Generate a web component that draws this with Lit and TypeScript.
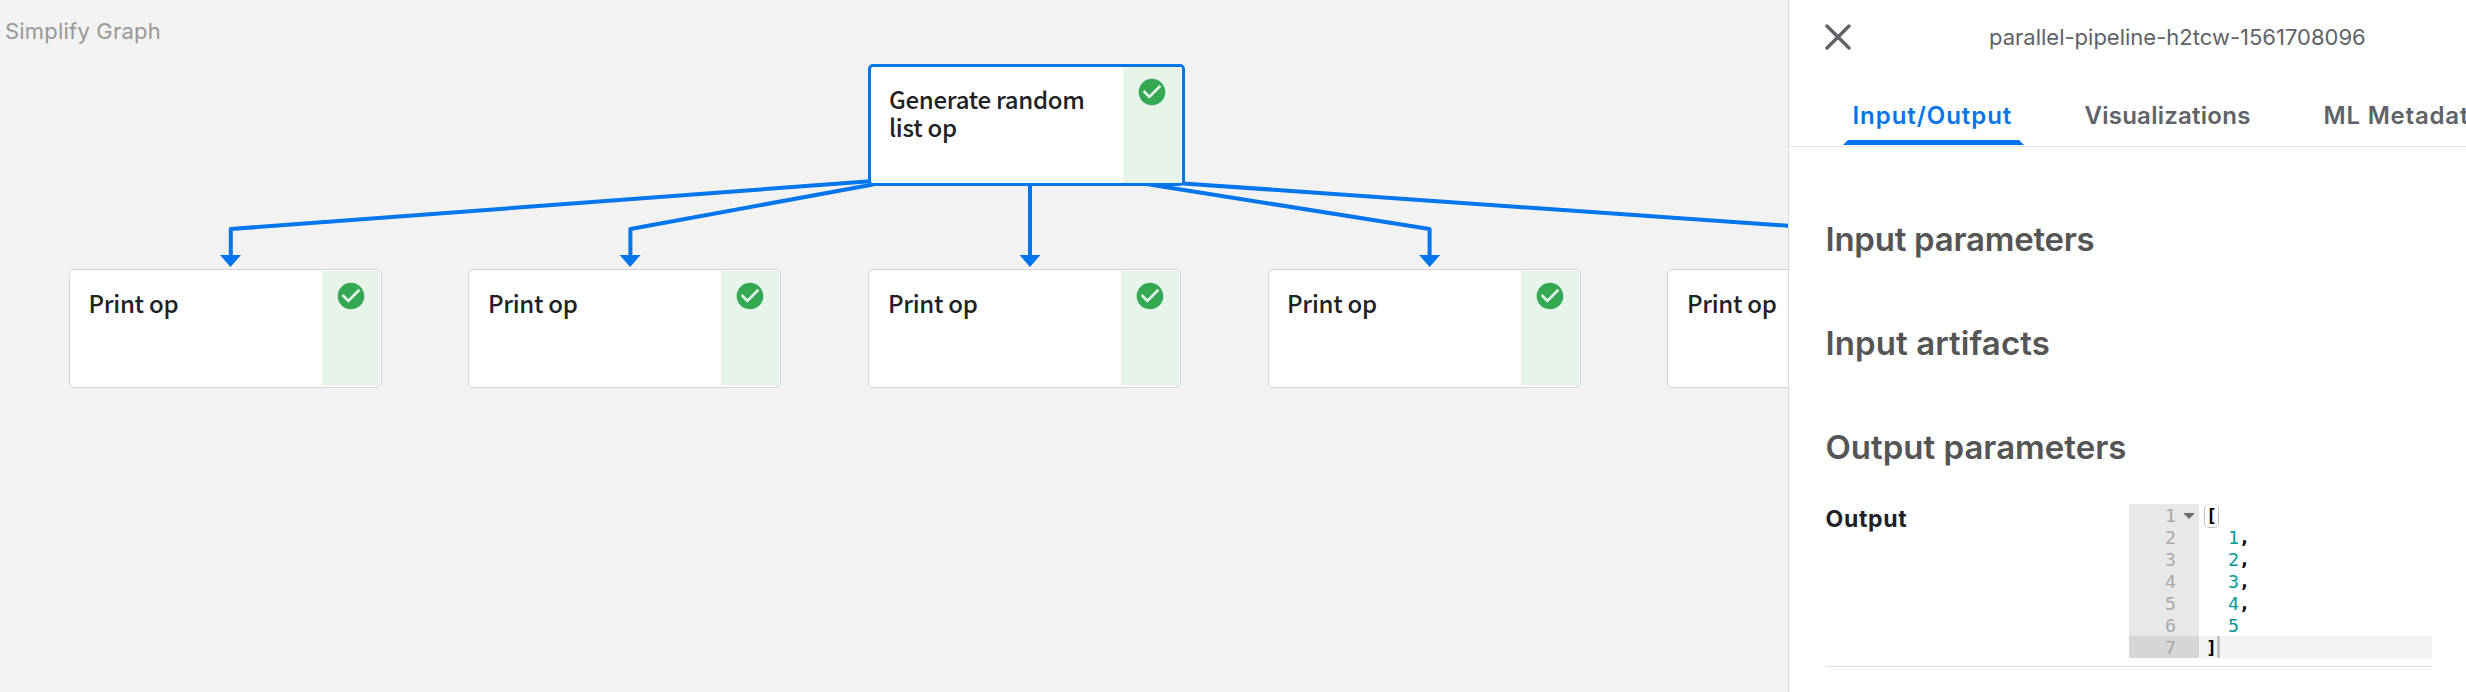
import { LitElement, html, svg, css } from "lit";
import { customElement, property } from "lit/decorators.js";
import { styleMap } from "lit/directives/style-map.js";

interface GraphNode {
  label: string;
  x: number;
  y: number;
  selected?: boolean;
}

const NODES: GraphNode[] = [
  { label: "Generate random list op", x: 868, y: 64, selected: true },
  { label: "Print op", x: 69, y: 269 },
  { label: "Print op", x: 468.4, y: 269 },
  { label: "Print op", x: 868.4, y: 269 },
  { label: "Print op", x: 1267.6, y: 269 },
  { label: "Print op", x: 1667.4, y: 269 },
];

const EDGES = [
  { points: "870,181.3 230.8,229 230.8,258", tip: 230.5 },
  { points: "873,184.5 630.4,229 630.4,258", tip: 630.1 },
  { points: "1030,186 1030,258", tip: 1030 },
  { points: "1140,183 1429.6,229 1429.6,258", tip: 1429.6 },
  { points: "1183,183.4 1829,228.6 1829,258", tip: 1829 },
];

@customElement("graph-node")
export class GraphNodeCard extends LitElement {
  @property() label = "";
  @property({ type: Boolean, reflect: true }) selected = false;

  static styles = css`
    :host {
      box-sizing: border-box;
      display: flex;
      width: 313px;
      height: 119px;
      padding: 1px;
      border: 1px solid #d4d4d4;
      border-radius: 5px;
      background: #fff;
      overflow: hidden;
    }
    :host([selected]) {
      width: 317px;
      height: 122px;
      padding: 0;
      border: 3px solid #0175ec;
    }
    .label {
      flex: 1;
      padding: 18px 20px 0 17.5px;
      font: 500 24px/28px "Noto Sans CJK SC", sans-serif;
      letter-spacing: -0.29px;
      color: #202124;
    }
    :host([selected]) .label {
      padding-top: 18px;
      padding-left: 18px;
    }
    .status {
      box-sizing: border-box;
      width: 58px;
      padding-top: 9px;
      background: #e6f4ea;
      display: flex;
      justify-content: center;
    }
    :host([selected]) .status {
      border-right: 1px solid #fff;
      width: 59px;
    }
    svg {
      width: 32px;
      height: 32px;
    }
  `;

  render() {
    return html`
      <div class="label">${this.label}</div>
      <div class="status">
        <svg viewBox="0 0 24 24">
          <path
            fill="#34a853"
            d="M12 2C6.48 2 2 6.48 2 12s4.480 10 10 10 10-4.480 10-10S17.520 2 12 2zm-2 15l-5-5 1.410-1.410L10 14.170l7.590-7.590L19 8l-9 9z"
          />
        </svg>
      </div>
    `;
  }
}

@customElement("json-editor")
export class JsonEditor extends LitElement {
  static styles = css`
    :host {
      display: block;
      width: 303px;
      font: 18.3px/23px "DejaVu Sans Mono", monospace;
    }
    .row {
      display: flex;
      height: 22px;
    }
    .gutter {
      box-sizing: border-box;
      width: 70px;
      padding: 1px 0 0 36px;
      background: #e8e8e8;
      color: #a8a8a8;
      display: flex;
      align-items: center;
      gap: 8px;
    }
    .code {
      flex: 1;
      padding-left: 7px;
      display: flex;
      white-space: pre;
    }
    .active .gutter {
      background: #d6d6d6;
    }
    .active .code {
      background: #f4f4f4;
    }
    .num {
      color: #099;
    }
    .bracket {
      font-weight: 700;
      color: #000;
    }
    .match {
      box-sizing: border-box;
      width: 15px;
      height: 24px;
      margin: 0 0 0 -2px;
      padding-left: 1px;
      border: 1px solid #c0c0c0;
      border-top: 0;
      border-radius: 5px;
    }
    .cursor {
      width: 3px;
      background: #c2c2c2;
    }
    .fold {
      width: 10px;
      height: 6px;
    }
  `;

  render() {
    return html`
      <div class="row">
        <div class="gutter">
          1<svg class="fold" viewBox="0 0 10 6"><path fill="#6e6e6e" d="M0 0h10v1L5 6 0 1z" /></svg>
        </div>
        <div class="code"><span class="bracket match">[</span></div>
      </div>
      ${[1, 2, 3, 4, 5].map(
        (n) => html`<div class="row">
          <div class="gutter">${n + 1}</div>
          <div class="code"><span>  </span><span class="num">${n}</span><span class="bracket">${n < 5 ? "," : ""}</span></div>
        </div>`
      )}
      <div class="row active">
        <div class="gutter">7</div>
        <div class="code"><span class="bracket">]</span><span class="cursor"></span></div>
      </div>
    `;
  }
}

@customElement("app-root")
export class AppRoot extends LitElement {
  static styles = css`
    :host {
      display: flex;
      width: 2466px;
      height: 692px;
      overflow: hidden;
      background: #f2f2f2;
      font-family: Inter, sans-serif;
    }
    .graph {
      position: relative;
      flex: 1;
      overflow: hidden;
    }
    .simplify {
      padding: 17px 0 0 5px;
      font-size: 22px;
      line-height: 28px;
      letter-spacing: 0.2px;
      color: #999;
    }
    .edges,
    graph-node {
      position: absolute;
    }
    .edges {
      left: 0;
      top: 0;
    }
    .panel {
      box-sizing: border-box;
      width: 678px;
      border-left: 1px solid #dcdcdc;
      background: #fff;
      overflow: hidden;
    }
    .head {
      display: flex;
      align-items: center;
      height: 73px;
      padding-left: 36px;
    }
    .close {
      width: 26px;
      height: 26px;
    }
    .title {
      margin-left: 138px;
      font-size: 22px;
      line-height: 28px;
      color: #5f6368;
    }
    .tabs {
      display: flex;
      height: 73px;
      padding-left: 54px;
      border-bottom: 1px solid #e6e6e6;
      white-space: nowrap;
      font-size: 24px;
      line-height: 30px;
      font-weight: 600;
      color: #5f6368;
    }
    .tab {
      display: flex;
      flex-direction: column;
      flex-shrink: 0;
      justify-content: space-between;
      padding-top: 28px;
      box-sizing: border-box;
      width: 181px;
      letter-spacing: 0.8px;
    }
    .tab span {
      padding-left: 9.5px;
    }
    .io {
      color: #0175ec;
      letter-spacing: 0.95px;
    }
    .vis {
      margin-left: 51px;
      width: 239px;
      letter-spacing: 0.25px;
    }
    .bar {
      height: 5px;
      margin-bottom: 1px;
      background: #0175ec;
      clip-path: polygon(5px 0, 176px 0, 100% 100%, 0 100%);
    }
    .body {
      padding: 72px 34px 0 36.5px;
    }
    h2 {
      margin: 0;
      height: 104px;
      font-size: 33px;
      line-height: 40px;
      font-weight: 600;
      color: #555;
      letter-spacing: -0.25px;
    }
    .artifacts {
      letter-spacing: 0.1px;
    }
    .last {
      height: 105px;
      letter-spacing: 0;
    }
    .output {
      display: flex;
      justify-content: space-between;
      height: 162px;
      margin-top: -28px;
      border-bottom: 1px solid #dedede;
    }
    .name {
      font-size: 23px;
      line-height: 30px;
      font-weight: 700;
      color: #202124;
      letter-spacing: 0.7px;
    }
  `;

  render() {
    return html`
      <div class="graph">
        <div class="simplify">Simplify Graph</div>
        <svg class="edges" width="1788" height="692">
          ${EDGES.map(
            (e) => svg`
              <polyline points=${e.points} fill="none" stroke="#0175ec" stroke-width="4" stroke-linejoin="round" />
              <path d="M${e.tip - 10.5} 255h21l-10.500 12z" fill="#0175ec" />`
          )}
        </svg>
        ${NODES.map(
          (n) => html`<graph-node
            style=${styleMap({ left: `${n.x}px`, top: `${n.y}px` })}
            .label=${n.label}
            ?selected=${!!n.selected}
          ></graph-node>`
        )}
      </div>
      <div class="panel">
        <div class="head">
          <svg class="close" viewBox="0 0 26 26">
            <path d="M2 2l22 22M24 2l-22 22" stroke="#5f6368" stroke-width="3.400" stroke-linecap="round" />
          </svg>
          <div class="title">parallel-pipeline-h2tcw-1561708096</div>
        </div>
        <div class="tabs">
          <div class="tab io"><span>Input/Output</span><div class="bar"></div></div>
          <div class="tab vis"><span>Visualizations</span></div>
          <div class="tab"><span>ML Metadata</span></div>
        </div>
        <div class="body">
          <h2>Input parameters</h2>
          <h2 class="artifacts">Input artifacts</h2>
          <h2 class="last">Output parameters</h2>
          <div class="output">
            <div class="name">Output</div>
            <json-editor></json-editor>
          </div>
        </div>
      </div>
    `;
  }
}
